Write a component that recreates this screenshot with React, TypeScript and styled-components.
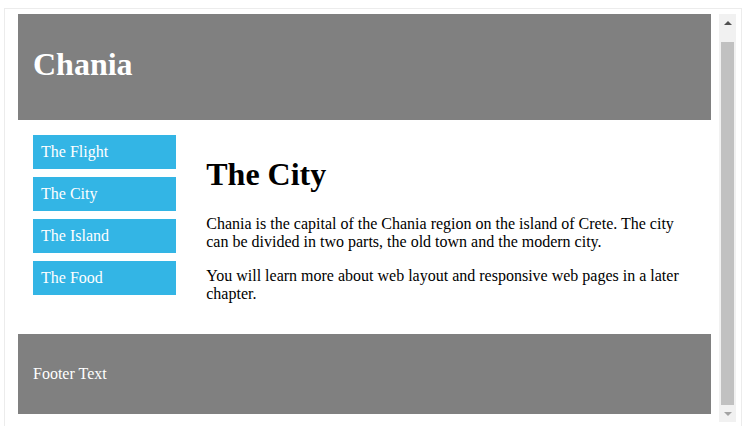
import styled, { createGlobalStyle } from "styled-components";

const GlobalStyle = createGlobalStyle`
  html, body {
    margin: 0;
    padding: 0;
    background: #ffffff;
    overflow: hidden;
  }
  body {
    font-family: "Liberation Serif", "Times New Roman", serif;
    font-size: 16px;
  }
`;

const Frame = styled.div`
  margin: 8px 0 0 4px;
  width: 738px;
  height: 430px;
  box-sizing: border-box;
  border: 1px solid #ececec;
  padding: 5px 5px 0 5px;
`;

const Viewport = styled.div`
  display: flex;
  height: 408px;
`;

const Page = styled.div`
  flex: 1;
  overflow: hidden;
  padding: 0 8px;
  color: #000;
`;

const Header = styled.header`
  background: #808080;
  color: #ffffff;
  height: 106px;
  box-sizing: border-box;
  padding: 32px 15px 0;

  h1 {
    margin: 0;
    font-size: 32px;
    font-weight: bold;
  }
`;

const Row = styled.div`
  display: flex;
`;

const MenuCol = styled.div`
  width: 25%;
  box-sizing: border-box;
  padding: 15px;
`;

const Menu = styled.ul`
  list-style: none;
  margin: 0;
  padding: 0;
  display: flex;
  flex-direction: column;
  gap: 8px;
`;

const MenuItem = styled.li`
  background: #33b5e5;
  color: #ffffff;
  padding: 8px;
  height: 34px;
  box-sizing: border-box;
  line-height: 18px;
`;

const MainCol = styled.div`
  width: 75%;
  box-sizing: border-box;
  padding: 15px;

  h1 {
    font-size: 32px;
    margin: 21.44px 0;
  }

  p {
    margin: 16px 0;
  }
`;

const Footer = styled.footer`
  background: #808080;
  color: #ffffff;
  height: 80px;
  box-sizing: border-box;
  padding: 0 15px;
  display: flex;
  align-items: center;
`;

const Scrollbar = styled.div`
  width: 17px;
  background: #f1f1f1;
  display: flex;
  flex-direction: column;
`;

const ArrowButton = styled.div<{ $down?: boolean }>`
  height: 17px;
  display: flex;
  align-items: center;
  justify-content: center;

  &::before {
    content: "";
    width: 0;
    height: 0;
    border-left: 4px solid transparent;
    border-right: 4px solid transparent;
    ${(p) =>
      p.$down
        ? "border-top: 4px solid #a3a3a3;"
        : "border-bottom: 4px solid #505050;"}
  }
`;

const Track = styled.div`
  flex: 1;
  display: flex;
  flex-direction: column;
  justify-content: flex-end;
  padding: 0 2px;
`;

const Thumb = styled.div`
  height: 363px;
  background: #c1c1c1;
`;

const menuItems = ["The Flight", "The City", "The Island", "The Food"];

const App = () => {
  return (
    <>
      <GlobalStyle />
      <Frame>
        <Viewport>
          <Page>
            <Header>
              <h1>Chania</h1>
            </Header>
            <Row>
              <MenuCol>
                <Menu>
                  {menuItems.map((item) => (
                    <MenuItem key={item}>{item}</MenuItem>
                  ))}
                </Menu>
              </MenuCol>
              <MainCol>
                <h1>The City</h1>
                <p>
                  Chania is the capital of the Chania region on the island of
                  Crete. The city can be divided in two parts, the old town and
                  the modern city.
                </p>
                <p>
                  You will learn more about web layout and responsive web pages
                  in a later chapter.
                </p>
              </MainCol>
            </Row>
            <Footer>Footer Text</Footer>
          </Page>
          <Scrollbar>
            <ArrowButton />
            <Track>
              <Thumb />
            </Track>
            <ArrowButton $down />
          </Scrollbar>
        </Viewport>
      </Frame>
    </>
  );
};

export default App;
